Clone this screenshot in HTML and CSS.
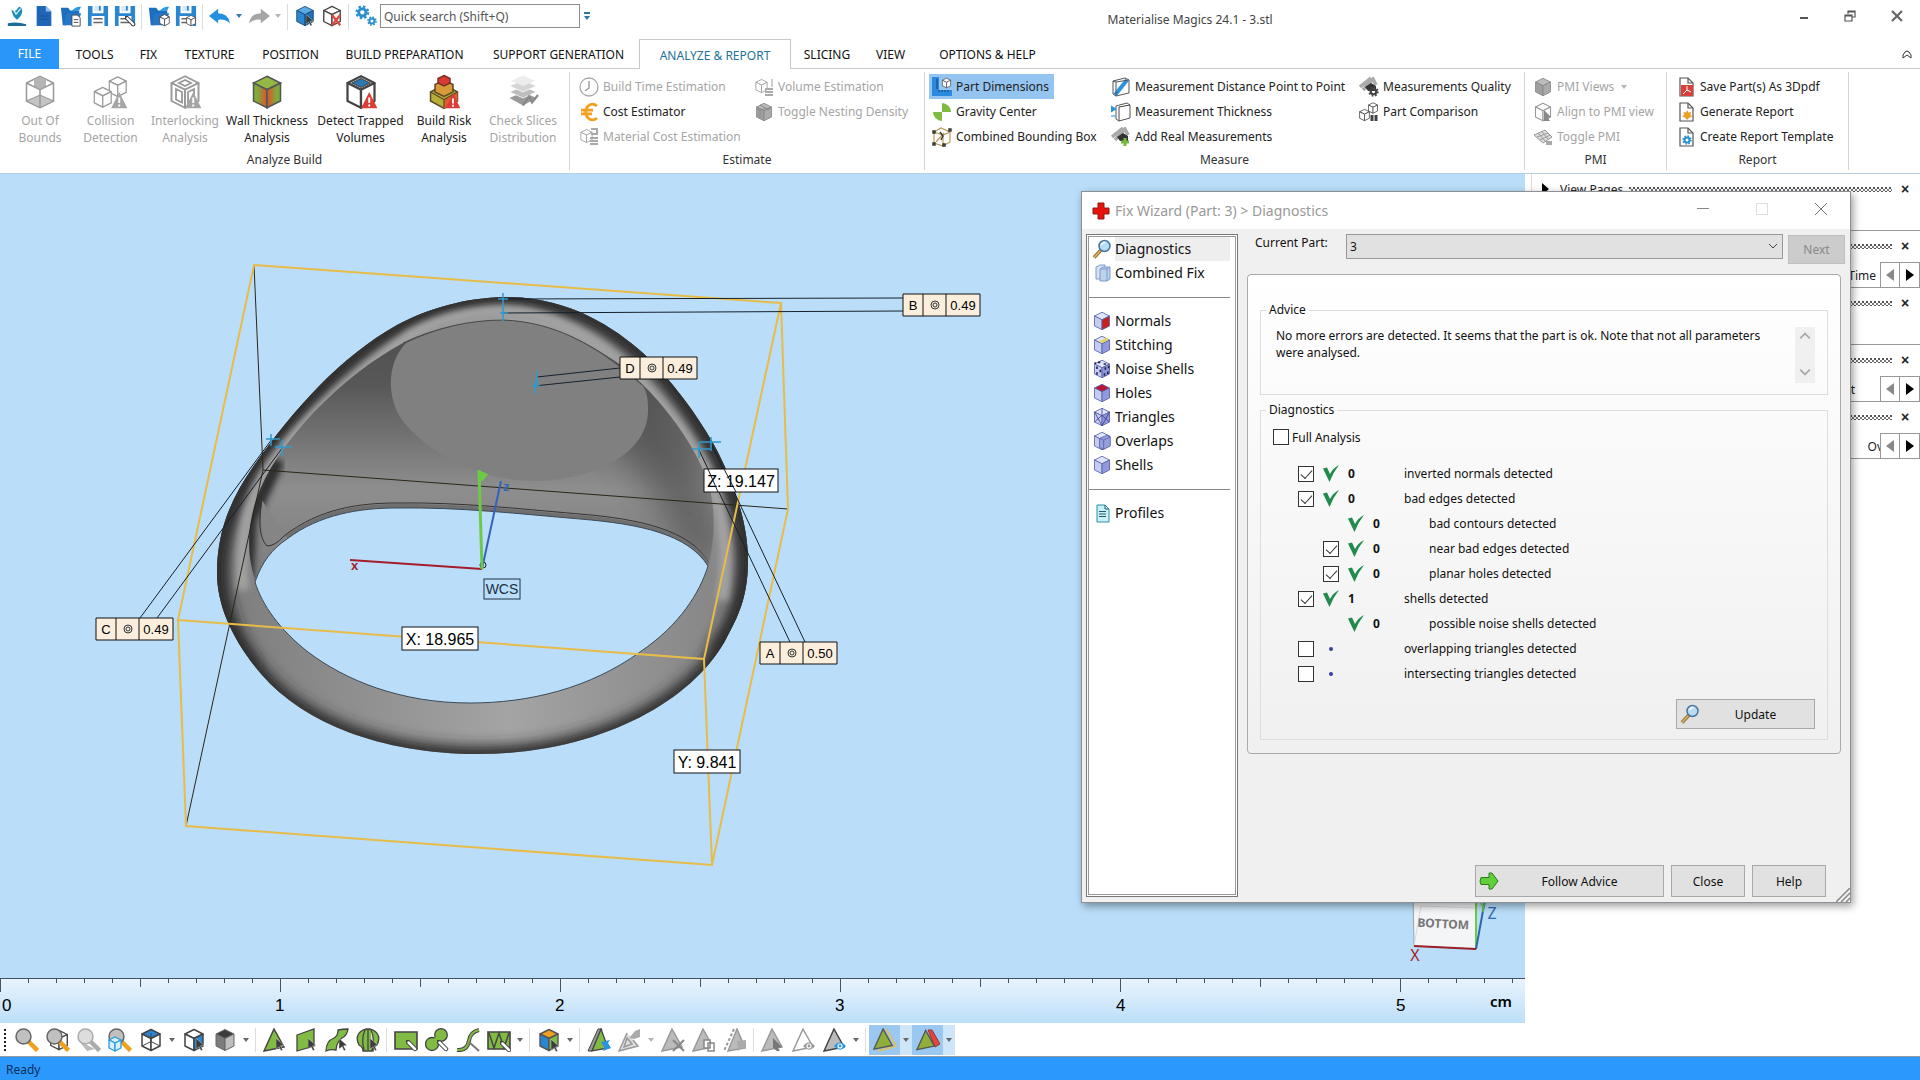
FILE: index.html
```html
<!DOCTYPE html>
<html lang="en">
<head>
  <meta charset="UTF-8" />
  <meta name="viewport" content="width=device-width, initial-scale=1.0" />
  <title>Materialise Magics 24.1 - 3.stl</title>
  <link rel="stylesheet" href="styles.css">
</head>
<body>
  <!-- shared icon shapes -->
  <svg class="defs" width="0" height="0" aria-hidden="true">
    <symbol id="cube" viewBox="0 0 24 24">
      <path class="ct" d="M12 1.500 21 6 12 10.500 3 6z"/>
      <path class="cl" d="M3 6 12 10.500V22.500L3 18z"/>
      <path class="cr" d="M21 6 12 10.500V22.500L21 18z"/>
    </symbol>
    <symbol id="warn" viewBox="0 0 12 12">
      <path d="M6 0 12 12H0z" fill="currentColor"/>
      <path d="M6 4v4M6 9v1.500" stroke="#fff" stroke-width="1.400"/>
    </symbol>
    <symbol id="pointer" viewBox="0 0 10 14">
      <path d="M0 0 9 8 5 8.500 7.500 13 5.500 14 3.500 9.500 0 12z" fill="#3c3c3c" stroke="#fff" stroke-width=".4"/>
    </symbol>
    <symbol id="folder" viewBox="0 0 24 24">
      <path d="M1 3h8l2 3h10v4L7 22H3z" fill="#1d6fbe"/>
      <path d="M7 9h16l-4 13H4z" fill="#2476c6"/>
      <path d="M12 7q5-6 11-5l-2 4z" fill="#2f9be0"/>
    </symbol>
    <symbol id="disk" viewBox="0 0 24 24">
      <path d="M1 1h5v8h12V1h5v22H1z" fill="#2a86cf"/>
      <path d="M8 1h8v6H8z" fill="#d8e8f5"/>
      <path d="M13 1h2v5h-2z" fill="#2a86cf"/>
      <path d="M5 12h14v11H5z" fill="#fff"/>
      <path d="M7 15h10M7 19h10" stroke="#666" stroke-width="1.600"/>
    </symbol>
    <symbol id="mag" viewBox="0 0 24 24">
      <path d="M13 13 22.500 22.500" stroke="var(--h)" stroke-width="4.500"/>
      <circle cx="8.500" cy="8.500" r="7.500" fill="var(--g)" stroke="var(--s)" stroke-width="1.500"/>
    </symbol>
    <symbol id="lens" viewBox="0 0 20 20">
      <path d="M9 11 2 18.500" stroke="#8d7340" stroke-width="3.600"/>
      <path d="M9 11 2 18.500" stroke="#e0b457" stroke-width="1.600"/>
      <circle cx="12.500" cy="7" r="5.500" fill="#b7dcf5" stroke="#47759f" stroke-width="1.500"/>
      <path d="M9.500 6q1-3 4-2.500" stroke="#fff" fill="none" stroke-width="1.500"/>
    </symbol>
    <symbol id="page" viewBox="0 0 20 20">
      <path d="M4 1h8l5 5v13H4z" fill="#fff" stroke="#555" stroke-width="1.200"/>
      <path d="M12 1v5h5" fill="none" stroke="#555" stroke-width="1.200"/>
    </symbol>
    <symbol id="tick" viewBox="0 0 16 17">
      <path d="M0 3.500 4 2.500 7 9Q10 3 16 0 10 7.500 6.500 17 4 12 0 3.500z" fill="#238a4d"/>
    </symbol>
    <symbol id="tri" viewBox="0 0 24 24">
      <path d="M11 1 21 19 1 23z" fill="var(--f)" stroke="var(--s)" stroke-width="1.500"/>
    </symbol>
    <symbol id="gear" viewBox="0 0 20 20">
      <circle cx="10" cy="10" r="5" fill="none" stroke="currentColor" stroke-width="4"/>
      <circle cx="10" cy="10" r="8" fill="none" stroke="currentColor" stroke-width="3" stroke-dasharray="3.200 3.080"/>
    </symbol>
    <symbol id="pen" viewBox="0 0 12 12">
      <path d="M1 1 9 9" stroke="#444" stroke-width="4.500" stroke-linecap="round"/>
      <path d="M2.500 2.500 9 9" stroke="#fff" stroke-width="2.500" stroke-linecap="round"/>
    </symbol>
    <symbol id="roof" viewBox="0 0 20 20">
      <path d="M1 10 12 1M4 13 14 2l3 6" stroke="#aaa" stroke-width="3.500" fill="none"/>
      <path d="M6 10 12 6 17 9V14H9z" fill="#333"/>
    </symbol>
    <symbol id="eye" viewBox="0 0 14 9">
      <path d="M0 4.500Q7-4 14 4.500 7 13 0 4.500z" fill="currentColor"/>
      <circle cx="7" cy="4.500" r="3" fill="#fff"/><circle cx="7" cy="4.500" r="1.700" fill="currentColor"/>
    </symbol>
  </svg>

  <header class="titlebar">
    <div class="quick">
      <button class="q" aria-label="Magics"><svg viewBox="0 0 24 24"><path d="M6 5q1 8 6 11 3-2 5-6 2-6-2-8-2 0-3 3L9 7z" fill="#1b8db5"/><path d="M8 5l3 5 5-6" fill="none" stroke="#dff1f7" stroke-width="1.500"/><path d="M2 20q10-2 20 1v2H2z" fill="#1b6a9a"/></svg></button>
      <button class="q" aria-label="New"><svg viewBox="0 0 24 24"><path d="M4 1h10l6 6v16H4z" fill="#1f66b8"/><path d="M14 1v6h6z" fill="#8fc0ee"/><path d="M8 12h8M8 15.500h8" stroke="#1a4f90" stroke-width="1.200"/></svg></button>
      <button class="q" aria-label="Open"><svg viewBox="0 0 24 24"><use href="#folder"/><path d="M13 11h6l3 3v9h-9z" fill="#fff" stroke="#444"/><path d="M15 16h5M15 19h5" stroke="#444"/></svg></button>
      <button class="q" aria-label="Save"><svg viewBox="0 0 24 24"><use href="#disk"/></svg></button>
      <button class="q" aria-label="Save as"><svg viewBox="0 0 24 24"><use href="#disk"/><use href="#pen" x="12" y="12" width="12" height="12"/></svg></button>
      <i class="vsep"></i>
      <button class="q" aria-label="Open part"><svg viewBox="0 0 24 24"><use href="#folder"/><use class="c-line" href="#cube" x="11" y="9" width="14" height="15"/></svg></button>
      <button class="q" aria-label="Save part"><svg viewBox="0 0 24 24"><use href="#disk"/><use class="c-line" href="#cube" x="11" y="10" width="13" height="14"/></svg></button>
      <i class="vsep"></i>
      <button class="q" aria-label="Undo"><svg viewBox="0 0 24 24"><path d="M0 12 10 4v5q11 0 13 11-5-5-13-4v4z" fill="#2491e0"/></svg></button>
      <i class="drop blue"></i>
      <button class="q" aria-label="Redo"><svg viewBox="0 0 24 24"><path d="M24 12 14 4v5Q3 9 1 20q5-5 13-4v4z" fill="#a5a5a5"/></svg></button>
      <i class="drop pale"></i>
      <i class="vsep"></i>
      <button class="q" aria-label="Select part"><svg viewBox="0 0 24 24"><use class="c-blue" href="#cube"/><use href="#pointer" x="13" y="10" width="9" height="13"/></svg></button>
      <button class="q" aria-label="Unload part"><svg viewBox="0 0 24 24"><use class="c-line" href="#cube"/><path d="m12 11 9 11m0-11-9 11" stroke="#e2463f" stroke-width="2.600"/></svg></button>
      <i class="vsep"></i>
      <button class="q c-gear" aria-label="Settings"><svg viewBox="0 0 24 24"><use href="#gear" x="0" y="0" width="16" height="16"/><use href="#gear" x="13" y="12" width="11" height="11"/></svg></button>
      <input class="search" type="text" placeholder="Quick search (Shift+Q)" aria-label="Quick search">
      <i class="drop bar"></i>
    </div>
    <h1 class="title">Materialise Magics 24.1 - 3.stl</h1>
    <div class="winbtns">
      <button aria-label="Minimize"><svg viewBox="0 0 12 12"><path d="M2 8h8" stroke="#555" stroke-width="2"/></svg></button>
      <button aria-label="Restore"><svg viewBox="0 0 12 12"><path d="M4 4V1h7v6H8M1 5h7v6H1zM1 6h7M4 2h7" fill="none" stroke="#555" stroke-width="1.200"/></svg></button>
      <button aria-label="Close"><svg viewBox="0 0 12 12"><path d="m1 1 10 10M11 1 1 11" stroke="#666" stroke-width="2.200"/></svg></button>
    </div>
  </header>

  <nav class="tabs">
    <a class="file" href="#">FILE</a>
    <a href="#">TOOLS</a>
    <a href="#">FIX</a>
    <a href="#">TEXTURE</a>
    <a href="#">POSITION</a>
    <a href="#">BUILD PREPARATION</a>
    <a href="#">SUPPORT GENERATION</a>
    <a class="active" href="#">ANALYZE &amp; REPORT</a>
    <a href="#">SLICING</a>
    <a href="#">VIEW</a>
    <a href="#">OPTIONS &amp; HELP</a>
    <button class="collapse" aria-label="Collapse ribbon"><svg viewBox="0 0 10 10"><path d="M1 6q4-8 8 0v3L5 6 1 9z" fill="none" stroke="#333"/></svg></button>
  </nav>

  <section class="ribbon">
    <div class="group">
      <div class="big-row">
        <button class="big off"><svg viewBox="0 0 24 24"><path d="M3 6 12 1.500 21 6V18L12 22.500 3 18z" fill="#fff" stroke="#999"/><path d="M3 18 12 14 21 18 12 22.500z" fill="#c4c4c4" stroke="#999" stroke-width=".7"/><path d="M8 4 12 2l4 2v4l-4 2-4-2z" fill="#b5b5b5"/><path d="M3 6 12 10.500 21 6M12 10.500V22" fill="none" stroke="#999"/></svg>Out Of<br>Bounds</button>
        <button class="big off"><svg viewBox="0 0 24 24"><use class="c-off" href="#cube" x="9" y="0" width="15" height="17"/><use class="c-off" href="#cube" x="-1" y="7" width="15" height="17"/><use href="#warn" x="12" y="12" width="11" height="11"/></svg>Collision<br>Detection</button>
        <button class="big off"><svg viewBox="0 0 24 24"><use class="c-off" href="#cube"/><path d="m6 10 4 2v7l-4-2zM18 10l-4 2v7l4-2zM8 6l4-2 4 2-4 2z" fill="none" stroke="#999" stroke-width="1.200"/><use href="#warn" x="12" y="12" width="11" height="11"/></svg>Interlocking<br>Analysis</button>
        <button class="big"><svg viewBox="0 0 24 24"><defs><linearGradient id="wl"><stop offset=".3" stop-color="#7faa3c"/><stop offset="1" stop-color="#e0502c"/></linearGradient><linearGradient id="wr"><stop offset="0" stop-color="#e0502c"/><stop offset=".7" stop-color="#7faa3c"/></linearGradient></defs><path d="M12 1.500 21 6 12 10.500 3 6z" fill="#94b844" stroke="#555"/><path d="M3 6 12 10.500V22.500L3 18z" fill="url(#wl)" stroke="#555"/><path d="M21 6 12 10.500V22.500L21 18z" fill="url(#wr)" stroke="#555"/></svg>Wall Thickness<br>Analysis</button>
        <button class="big"><svg viewBox="0 0 24 24"><use class="c-line" href="#cube"/><path d="M6 6 12 3l6 3-6 3z" fill="#2a7ab8" stroke="#444" stroke-width=".7"/><use class="red" href="#warn" x="12" y="12" width="11" height="11"/></svg>Detect Trapped<br>Volumes</button>
        <button class="big"><svg viewBox="0 0 24 24"><path d="M12 7 21 12v6l-9 5-9-5v-6z" fill="#b7ae38" stroke="#5c4a2a"/><path d="M12 17 21 12v6l-9 5z" fill="#e05a33"/><path d="m3 12 9 5 9-5M12 17v5" fill="none" stroke="#5c4a2a" stroke-width=".8"/><path d="m12 4 6 3v5l-6 3-6-3V7z" fill="#d79b38" stroke="#5c4a2a"/><path d="m12 1 4 2v3l-4 2-4-2V3z" fill="#d83a34" stroke="#7a3028"/><use class="red" href="#warn" x="13" y="13" width="10" height="10"/></svg>Build Risk<br>Analysis</button>
        <button class="big off"><svg viewBox="0 0 24 24"><path d="m12 12 9 4-9 5-9-5z" fill="#999"/><path d="m12 8 9 4-9 4-9-4z" fill="#bdbdbd" stroke="#fff" stroke-width=".5"/><path d="m12 4 9 4-9 4-9-4z" fill="#d5d5d5" stroke="#fff" stroke-width=".5"/><path d="m12 1 8 3.500-8 3.500-8-3.500z" fill="#ececec"/><path d="m12 21 4-6 2 4 4-5" fill="none" stroke="#888" stroke-width="1.500"/></svg>Check Slices<br>Distribution</button>
      </div>
      <h2>Analyze Build</h2>
    </div>

    <div class="group">
      <div class="cols estimate">
        <div class="col">
          <button class="small off"><svg viewBox="0 0 20 20"><circle cx="10" cy="10" r="9" fill="#fff" stroke="#aaa" stroke-width="1.300"/><path d="M10 4v7l-4 3" fill="none" stroke="#999" stroke-width="1.400"/></svg>Build Time Estimation</button>
          <button class="small"><svg viewBox="0 0 20 20"><path d="M18 4Q13 0 8.500 4.500 5 10 8.500 15.500 13 20 18 16M2 8.200h12M2 11.800h11" fill="none" stroke="#f0a01e" stroke-width="2.800"/></svg>Cost Estimator</button>
          <button class="small off"><svg viewBox="0 0 20 20"><use class="c-off" href="#cube" width="15" height="18"/><path d="M11 11h8M11 14h8M11 17h8M12 2h6v5h-6" stroke="#aaa" stroke-width="2" fill="none"/></svg>Material Cost Estimation</button>
        </div>
        <div class="col">
          <button class="small off"><svg viewBox="0 0 20 20"><use class="c-off" href="#cube" width="15" height="18"/><path d="M11 12h8M11 15h8M11 18h8" stroke="#aaa" stroke-width="2"/><path d="M18 2v8" stroke="#999"/></svg>Volume Estimation</button>
          <button class="small off"><svg viewBox="0 0 20 20"><use class="c-grey" href="#cube" width="20" height="20"/><path d="M3 8 17 6M6 3l9 5M6 8v8" stroke="#888"/></svg>Toggle Nesting Density</button>
        </div>
      </div>
      <h2>Estimate</h2>
    </div>

    <div class="group">
      <div class="cols measure">
        <div class="col">
          <button class="small on"><svg viewBox="0 0 20 20"><path d="M0 0h7v13h13v6H0z" fill="#2a8ae0"/><path d="M5 2v10M7 13v2m3-2v2m3-2v2m3-2v2" stroke="#123e70"/><use class="c-line" href="#cube" x="9" y="0" width="11" height="12"/></svg>Part Dimensions</button>
          <button class="small"><svg viewBox="0 0 20 20"><path d="M10 10h9a9 9 0 0 1-9 9zM10 10H1a9 9 0 0 1 9-9z" fill="#fff"/><path d="M10 10V1a9 9 0 0 1 9 9zM10 10v9a9 9 0 0 1-9-9z" fill="#7dbb42"/></svg>Gravity Center</button>
          <button class="small"><svg viewBox="0 0 20 20"><path d="m2 5 7-4 9 4v10l-7 4-9-3zM2 5l9 3 7-3M11 8v11M4 15l8-9" fill="none" stroke="#b99b5a" stroke-width="1.200"/><path d="M1 4h2v2H1zM17 2h2v2h-2zM1 16h2v2H1zM11 17h2v2h-2zM8 5l3 4-2 4" fill="none" stroke="#333" stroke-width="1.400"/></svg>Combined Bounding Box</button>
        </div>
        <div class="col">
          <button class="small"><svg viewBox="0 0 20 20"><path d="m2 4 12-3 4 2v13L5 19l-3-2z" fill="#fff" stroke="#555"/><path d="M4 18 16 3" stroke="#2a94dc" stroke-width="4"/><path d="M5 5v14M5 5 18 3M2 4l3 1" fill="none" stroke="#555"/></svg>Measurement Distance Point to Point</button>
          <button class="small"><svg viewBox="0 0 20 20"><path d="m5 4 11-3 3 2v13L8 19l-3-2z" fill="#fff" stroke="#555"/><path d="M8 5v14M8 5 19 3" stroke="#444" fill="none"/><path d="M0 4l5 3-5 3zM5 14h-5" fill="#2a94dc" stroke="#2a94dc"/></svg>Measurement Thickness</button>
          <button class="small"><svg viewBox="0 0 20 20"><use href="#roof" width="20" height="20"/><path d="M14 11v8M10 15h8" stroke="#78b83e" stroke-width="3"/></svg>Add Real Measurements</button>
        </div>
        <div class="col">
          <button class="small"><svg viewBox="0 0 20 20"><use href="#roof" width="20" height="20"/><g class="dark"><use href="#gear" x="9" y="9" width="11" height="11"/></g></svg>Measurements Quality</button>
          <button class="small"><svg viewBox="0 0 20 20"><use class="c-line" href="#cube" x="8" y="0" width="12" height="12"/><use class="c-line" href="#cube" x="-1" y="6" width="13" height="14"/><path d="M13 13v6M17 13v6" stroke="#444" stroke-width="3"/></svg>Part Comparison</button>
        </div>
      </div>
      <h2>Measure</h2>
    </div>

    <div class="group">
      <div class="col pmi">
        <button class="small off"><svg viewBox="0 0 20 20"><use class="c-grey" href="#cube" width="20" height="20"/></svg>PMI Views<i class="drop pale"></i></button>
        <button class="small off"><svg viewBox="0 0 20 20"><use class="c-off" href="#cube" width="20" height="20"/><path d="m11 8 7 7-3 1 2 3h-6z" fill="#888"/></svg>Align to PMI view</button>
        <button class="small off"><svg viewBox="0 0 20 20"><path d="M1 8 12 3l7 7-9 6zM4 10l11-4M7 13l10-5M5 6l8 9M9 5l7 8" fill="#ddd" stroke="#999"/><path d="M13 14h6v4h-6z" fill="#aaa"/></svg>Toggle PMI</button>
      </div>
      <h2>PMI</h2>
    </div>

    <div class="group">
      <div class="col report">
        <button class="small"><svg viewBox="0 0 20 20"><use href="#page"/><path d="M5 8h12v11H5z" fill="#d9403a"/><path d="m7 17 4-4V9m0 4 4 2" stroke="#fff" fill="none"/></svg>Save Part(s) As 3Dpdf</button>
        <button class="small"><svg viewBox="0 0 20 20"><use href="#page"/><path d="m11 8 1.500 2.500L15 10l-.5 3 2 1.500-3 1L11 18l-2-2.500-3-1L8 13l-.5-3 2.500.5z" fill="#eb9f26"/></svg>Generate Report</button>
        <button class="small c-gear"><svg viewBox="0 0 20 20"><use href="#page"/><use href="#gear" x="6" y="8" width="10" height="10"/></svg>Create Report Template</button>
      </div>
      <h2>Report</h2>
    </div>
  </section>

  <main class="work">
    <div class="viewport">
      <svg class="scene" width="100%" height="100%" role="img" aria-label="Ring model with bounding box">
        <defs>
          <path id="outer" d="M217 573C217 530 232 497 253 467C293 410 340 357 397 325C437 304 475 297 510 297C570 298 615 328 643 353C672 380 697 415 713 443C735 483 748 525 748 560C748 592 741 612 727 637C695 700 600 754 478 754C380 754 303 722 262 675C232 640 217 605 217 573Z"/>
          <path id="hole" d="M255 582C262 562 272 549 287 539C320 514 360 508 397 508C460 507 520 514 580 519C640 524 688 534 708 566C700 592 680 625 640 652C590 688 530 703 470 703C400 703 345 680 308 652C280 630 262 605 255 582Z"/>
          <path id="inside" d="M255 580C246 552 248 525 256 500C266 470 286 443 313 413C345 380 375 358 403 343C435 328 470 320 503 320C555 322 590 345 620 365C660 395 700 450 710 490C716 515 714 545 708 566C688 534 640 524 580 519C520 514 460 507 397 508C360 508 320 514 287 539C272 549 262 562 255 580Z"/>
          <clipPath id="outer-clip"><use href="#outer"/></clipPath>
          <clipPath id="inside-clip"><use href="#inside"/></clipPath>
          <filter id="b3" x="-20%" y="-20%" width="140%" height="140%"><feGaussianBlur stdDeviation="3"/></filter>
          <filter id="b8" x="-20%" y="-20%" width="140%" height="140%"><feGaussianBlur stdDeviation="7"/></filter>
          <filter id="b16" x="-20%" y="-20%" width="140%" height="140%"><feGaussianBlur stdDeviation="16"/></filter>
          <linearGradient id="wall" x1="0" y1="0" x2="0" y2="1">
            <stop offset="0" stop-color="#4e4e4e"/><stop offset=".25" stop-color="#585858"/><stop offset=".65" stop-color="#8e8e8e"/><stop offset="1" stop-color="#7c7c7c"/>
          </linearGradient>
          <linearGradient id="band" x1="0" y1="0" x2="1" y2="0">
            <stop offset="0" stop-color="#7c7c7c"/><stop offset=".55" stop-color="#a4a4a4"/><stop offset="1" stop-color="#828282"/>
          </linearGradient>
        </defs>
        <g transform="translate(0,-174)">
          <!-- ring -->
          <use href="#outer" fill="url(#band)"/>
          <g clip-path="url(#outer-clip)">
            <use href="#outer" fill="none" stroke="#2c2c2c" stroke-width="15" filter="url(#b8)"/>
            <path d="M250 670C225 640 217 600 217 573C217 530 232 497 253 467C293 410 340 357 397 325C437 304 475 297 510 297C570 298 615 328 643 353C672 380 697 415 713 443C735 483 748 525 748 560C748 600 735 635 715 655" fill="none" stroke="#333" stroke-width="18" filter="url(#b8)"/>
            <use href="#outer" fill="none" stroke="#2c2c2c" stroke-width="3" filter="url(#b3)"/>
            <path d="M243 590C238 545 248 500 269 468C295 430 349 378 414 333C445 317 475 311 505 311C545 312 583 334 610 354C652 390 682 428 704 467C723 507 730 550 722 600" fill="none" stroke="#a2a2a2" stroke-width="12" filter="url(#b3)"/>
          </g>
          <use href="#inside" fill="url(#wall)"/>
          <g clip-path="url(#inside-clip)">
            <path d="M720 545 700 455 640 372 610 430 700 570z" fill="#4a4a4a" opacity=".6" filter="url(#b16)"/>
            <path d="M246 590 250 520 278 460" fill="none" stroke="#2e2e2e" stroke-width="14" filter="url(#b3)"/>
            <path d="M262 500Q280 530 290 538L268 546Q258 530 262 500z" fill="#858585"/>
            <path d="M262 500Q256 535 267 546Q275 546 284 536" fill="none" stroke="#333"/>
            <path d="M284 536C320 508 360 503 397 503C460 502 520 509 580 514C640 519 690 530 708 562" fill="none" stroke="#333"/>
            <path d="M287 537C320 511 360 506 397 506C460 505 520 512 580 517C640 522 690 534 708 565" fill="none" stroke="#6f6f6f" stroke-width="4"/>
          </g>
          <path d="M406 343C385 365 388 400 402 420C430 455 480 481 537 481C600 479 650 450 648 408C648 398 647 392 642 385C600 350 560 322 503 320C470 320 435 329 406 343Z" fill="#808080"/>
          <path d="M403 343C435 328 470 320 503 320C555 322 590 345 620 365L642 385" fill="none" stroke="#4a4a4a"/>
          <use href="#hole" fill="#badef9" stroke="#3b4a57"/>

          <!-- bounding box, hidden edges thin -->
          <path d="M254 265 263 470 788 509M263 470 186 826" fill="none" stroke="#2b2618"/>
          <path d="M254 265 781 303 788 509 712 865 186 826 178 620zM178 620 704 659 712 865M704 659 781 303" fill="none" stroke="#e8bc48" stroke-width="2"/>

          <!-- measurement leaders -->
          <path d="M503 299 903 298M503 313 903 311M537 377 620 368M534 386 620 377M140 618 272 439M157 618 283 447M699 450 790 642M711 443 805 642" fill="none" stroke="#16202c"/>
          <path d="M503 293v28M498 299h10M500 313h8M266 439h14M271 434v12M275 447h17M282 440v16M537 371v15M532 386h8M535 380v14M692 449h18M699 442v16M700 442h21M711 437v14" fill="none" stroke="#2f9acb" stroke-width="1.500"/>

          <!-- world axes -->
          <circle cx="483" cy="565" r="3" fill="none" stroke="#16202c"/>
          <path d="M350 560 482 569" stroke="#a51d2c" stroke-width="2"/>
          <path d="M482 569 501 481" stroke="#3560c0" stroke-width="2"/>
          <path d="M482 569 479 470" stroke="#6ccb45" stroke-width="3"/>
          <path d="m478 470 10 4-5 7-5-2z" fill="#6ccb45"/>
          <text class="axis red-t" x="351" y="570">x</text>
          <text class="axis blue-t" x="503" y="491">z</text>

          <g class="dim">
            <rect x="402" y="627" width="76" height="23"/><text x="440" y="645">X: 18.965</text>
            <rect x="704" y="469" width="74" height="23"/><text x="741" y="487">Z: 19.147</text>
            <rect x="674" y="750" width="66" height="23"/><text x="707" y="768">Y: 9.841</text>
          </g>
          <path d="M708 469 718 492M724 469 736 492" stroke="#16202c"/>
          <rect x="484" y="579" width="36" height="20" fill="none" stroke="#1c2f42"/>
          <text class="wcs" x="502" y="594">WCS</text>

          <g class="tag" transform="translate(903,294)"><path d="M0 0h77v22H0zM20 0v22M43 0v22"/><circle cx="32" cy="11" r="4"/><circle cx="32" cy="11" r="2"/><text x="10" y="16">B</text><text x="60" y="16">0.49</text></g>
          <g class="tag" transform="translate(620,357)"><path d="M0 0h77v22H0zM20 0v22M43 0v22"/><circle cx="32" cy="11" r="4"/><circle cx="32" cy="11" r="2"/><text x="10" y="16">D</text><text x="60" y="16">0.49</text></g>
          <g class="tag" transform="translate(760,642)"><path d="M0 0h77v22H0zM20 0v22M43 0v22"/><circle cx="32" cy="11" r="4"/><circle cx="32" cy="11" r="2"/><text x="10" y="16">A</text><text x="60" y="16">0.50</text></g>
          <g class="tag" transform="translate(96,618)"><path d="M0 0h77v22H0zM20 0v22M43 0v22"/><circle cx="32" cy="11" r="4"/><circle cx="32" cy="11" r="2"/><text x="10" y="16">C</text><text x="60" y="16">0.49</text></g>

          <!-- orientation cube -->
          <path d="M1413 895h63v54l-62-3z" fill="#f4f5f6" stroke="#98a2ab"/>
          <path d="M1414 946 1421 906 1476 908" fill="none" stroke="#d8dadc"/>
          <path d="M1476 895v54" stroke="#6ccb45" stroke-width="2"/>
          <path d="M1476 949 1485 900" stroke="#2f68ac" stroke-width="2"/>
          <path d="M1414 946 1476 949" stroke="#991f28" stroke-width="2"/>
          <text class="bottom" transform="translate(1443,928) rotate(3)">BOTTOM</text>
          <text class="cube-ax red-t" x="1415" y="961">X</text>
          <text class="cube-ax blue-t" x="1492" y="919">Z</text>
          <text class="cube-ax green-t" x="1483" y="912">Y</text>
        </g>
      </svg>

      <svg class="ruler" width="100%" height="45" role="img" aria-label="Ruler in centimetres">
        <defs>
          <pattern id="ticks" width="280" height="16" patternUnits="userSpaceOnUse">
            <path d="M.5 0v14M140.500 0v9M28.500 0v5M56.500 0v5M84.500 0v5M112.500 0v5M168.500 0v5M196.500 0v5M224.500 0v5M252.500 0v5" stroke="#3f5468"/>
          </pattern>
        </defs>
        <rect width="100%" height="16" fill="url(#ticks)"/>
        <path d="M0 .5h1525" stroke="#3f5468"/>
        <text x="2" y="33">0</text>
        <text x="275" y="33">1</text>
        <text x="555" y="33">2</text>
        <text x="835" y="33">3</text>
        <text x="1116" y="33">4</text>
        <text x="1396" y="33">5</text>
        <text class="unit" x="1490" y="29">cm</text>
      </svg>
    </div>

    <aside class="pages">
      <section class="sheet line">
        <header><i class="open"></i><span>View Pages</span><i class="dots"></i><button aria-label="Close">×</button></header>
      </section>
      <section class="sheet">
        <header><i class="dots"></i><button aria-label="Close">×</button></header>
        <div class="strip"><span>Time</span><button aria-label="Left"><i class="arr left"></i></button><button aria-label="Right"><i class="arr"></i></button></div>
      </section>
      <section class="sheet line">
        <header><i class="dots"></i><button aria-label="Close">×</button></header>
      </section>
      <section class="sheet">
        <header><i class="dots"></i><button aria-label="Close">×</button></header>
        <div class="strip"><span class="far">t</span><button aria-label="Left"><i class="arr left"></i></button><button aria-label="Right"><i class="arr"></i></button></div>
      </section>
      <section class="sheet">
        <header><i class="dots"></i><button aria-label="Close">×</button></header>
        <div class="strip"><span class="cut">Ov</span><button aria-label="Left"><i class="arr left"></i></button><button aria-label="Right"><i class="arr"></i></button></div>
      </section>
    </aside>
  </main>

  <div class="toolbar">
    <i class="grip"></i>
    <button class="t m-color" aria-label="Zoom"><svg viewBox="0 0 24 24"><use href="#mag"/></svg></button>
    <button class="t m-color" aria-label="Zoom part"><svg viewBox="0 0 24 24"><use class="c-line" href="#cube" x="2" width="22" height="24"/><use href="#mag"/></svg></button>
    <button class="t m-grey" aria-label="Unzoom"><svg viewBox="0 0 24 24"><path d="M2 13 10 23l8-2z" fill="#bbb"/><use href="#mag"/></svg></button>
    <button class="t m-color" aria-label="Zoom box"><svg viewBox="0 0 24 24"><use href="#mag"/><use class="c-skyline" href="#cube" x="-2" y="8" width="18" height="16"/></svg></button>
    <button class="t" aria-label="View"><svg viewBox="0 0 24 24"><use class="c-top" href="#cube"/><path d="M3 18 12 13.500 21 18M12 13V5" fill="none" stroke="#444"/></svg></button>
    <i class="drop"></i>
    <button class="t" aria-label="Face view"><svg viewBox="0 0 24 24"><use class="c-side" href="#cube"/><use href="#pointer" x="14" y="10" width="9" height="13"/></svg></button>
    <button class="t" aria-label="Shading"><svg viewBox="0 0 24 24"><use class="c-shade" href="#cube"/></svg></button>
    <i class="drop"></i>
    <i class="tsep"></i>
    <button class="t t-green" aria-label="Mark triangle"><svg viewBox="0 0 24 24"><use href="#tri"/><use href="#pointer" x="13" y="10" width="9" height="13"/></svg></button>
    <button class="t" aria-label="Mark plane"><svg viewBox="0 0 24 24"><path d="M3 7 20 1v17L3 23z" fill="#82bb44" stroke="#444" stroke-width="1.300"/><use href="#pointer" x="14" y="10" width="9" height="13"/></svg></button>
    <button class="t" aria-label="Mark surface"><svg viewBox="0 0 24 24"><path d="M13 2q5-1 10-1-1 7-6 9-5 3-6 12-5-1-10 1 0-10 8-13 4-2 4-8z" fill="#82bb44" stroke="#444" stroke-width="1.300"/><use href="#pointer" x="14" y="10" width="9" height="13"/></svg></button>
    <button class="t" aria-label="Mark shell"><svg viewBox="0 0 24 24"><path d="M7 23q0-4-4-6Q-2 7 7 2q5-2 10 0 9 5 4 15-4 2-4 6zM8 22Q5 10 9 2M12 22V1M16 22q3-12-1-20" fill="#82bb44" stroke="#444" stroke-width="1.300"/><use href="#pointer" x="14" y="10" width="9" height="13"/></svg></button>
    <i class="tsep"></i>
    <button class="t" aria-label="Rectangle marking"><svg viewBox="0 0 24 24"><path d="M1 4h22v17H1z" fill="#82bb44" stroke="#444" stroke-width="1.600"/><use href="#pen" x="12" y="12" width="12" height="12"/></svg></button>
    <button class="t" aria-label="Freeform marking"><svg viewBox="0 0 24 24"><circle cx="7" cy="16" r="6.500" fill="#82bb44" stroke="#444" stroke-width="1.300"/><circle cx="16" cy="7" r="6.300" fill="#82bb44" stroke="#444" stroke-width="1.300"/><path d="m6 13 7-6 4 4-7 7z" fill="#82bb44"/><use href="#pen" x="12" y="12" width="12" height="12"/></svg></button>
    <button class="t" aria-label="Brush marking"><svg viewBox="0 0 24 24"><path d="M1 22q10 1 12-9Q14 4 23 2" fill="none" stroke="#444" stroke-width="4"/><path d="M1 22q10 1 12-9Q14 4 23 2" fill="none" stroke="#82bb44" stroke-width="2"/><path d="m13 14 10 9" stroke="#777" stroke-width="2"/></svg></button>
    <button class="t" aria-label="Mark region"><svg viewBox="0 0 24 24"><path d="M1 4h22v17H1z" fill="#82bb44" stroke="#444" stroke-width="1.600"/><path d="m2 5 5 15 5-15 5 15 5-15" fill="none" stroke="#444" stroke-width="1.500"/><use href="#pen" x="13" y="13" width="12" height="12"/></svg></button>
    <i class="drop"></i>
    <i class="tsep"></i>
    <button class="t" aria-label="Mark part"><svg viewBox="0 0 24 24"><use class="c-multi" href="#cube"/><use href="#pointer" x="14" y="11" width="9" height="13"/></svg></button>
    <i class="drop"></i>
    <i class="tsep"></i>
    <button class="t t-green" aria-label="Toggle marked"><svg viewBox="0 0 24 24"><path d="M11 1 1 23h4L15 1z" fill="#999" stroke="#444"/><path d="M14 1 5 23l16-3z" fill="#82bb44" stroke="#444" stroke-width="1.300"/><path d="m14 14 9-2-2 3 3 5-8 3 1-4z" fill="#2a94dc"/></svg></button>
    <button class="t" aria-label="Reduce"><svg viewBox="0 0 24 24"><path d="M9 5 1 23l19-5-5-6M9 10 6 19l8-3z" fill="#ddd" stroke="#999" stroke-width="1.500"/><path d="m11 10 6-7 5-2v8l-6 2z" fill="#aaa"/></svg></button>
    <i class="drop pale"></i>
    <button class="t t-grey" aria-label="Delete marked"><svg viewBox="0 0 24 24"><use href="#tri"/><path d="m12 12 11 11m0-11L12 23" stroke="#888" stroke-width="2"/></svg></button>
    <button class="t t-grey" aria-label="Copy marked"><svg viewBox="0 0 24 24"><use href="#tri"/><path d="M12 12h6v8h-6zM16 15h6v8h-6z" fill="#fff" stroke="#888" stroke-width="1.500"/></svg></button>
    <button class="t" aria-label="Separate marked"><svg viewBox="0 0 24 24"><path d="M11 1 1 23" stroke="#999" stroke-width="2" stroke-dasharray="3 2"/><path d="M14 1 5 23l17-3z" fill="#bbb" stroke="#999" stroke-width="1.500"/><path d="m14 13 9-1v9l-3-2-5 4z" fill="#aaa"/></svg></button>
    <i class="tsep"></i>
    <button class="t t-grey" aria-label="Select"><svg viewBox="0 0 24 24"><use href="#tri"/><path d="m12 10 9 9-4 1 2 3h-3l-4-3z" fill="#777"/></svg></button>
    <button class="t t-hollow" aria-label="Hide marked"><svg viewBox="0 0 24 24"><use href="#tri"/><use href="#eye" x="11" y="14" width="12" height="8"/></svg></button>
    <button class="t t-dark" aria-label="Show marked"><svg viewBox="0 0 24 24"><use href="#tri"/><use href="#eye" x="11" y="14" width="12" height="8"/></svg></button>
    <i class="drop"></i>
    <i class="tsep"></i>
    <button class="t t-olive hot" aria-label="Show outline"><svg viewBox="0 0 24 24"><path d="m13 1 10 17-18 5" fill="none" stroke="#d8c070" stroke-width="2"/><use href="#tri" width="22" height="22"/></svg></button>
    <i class="drop hot2"></i>
    <button class="t t-olive hot" aria-label="Show back faces"><svg viewBox="0 0 24 24"><path d="m12 2 4 0 8 14-5 3z" fill="#e2463f" stroke="#933"/><use href="#tri" width="21" height="24"/></svg></button>
    <i class="drop hot2"></i>
  </div>
  <footer class="status">Ready</footer>

  <div class="dialog" role="dialog" aria-label="Fix Wizard">
    <header class="dlg-title">
      <svg viewBox="0 0 18 18"><path d="M6 1h6v5h5v6h-5v5H6v-5H1V6h5z" fill="#e8120c" stroke="#8d1a14"/></svg>
      <h2>Fix Wizard (Part: 3) &gt; Diagnostics</h2>
      <button aria-label="Minimize"><svg viewBox="0 0 14 14"><path d="M1 6.500h12" stroke="#888"/></svg></button>
      <button aria-label="Maximize"><svg viewBox="0 0 14 14"><path d="M1.500 1.500h11v11h-11z" fill="none" stroke="#ddd"/></svg></button>
      <button aria-label="Close"><svg viewBox="0 0 14 14"><path d="m1 1 12 12M13 1 1 13" stroke="#777"/></svg></button>
    </header>
    <div class="dlg-body">
      <ul class="steps">
        <li class="current"><svg viewBox="0 0 20 20"><use href="#lens"/></svg><a href="#">Diagnostics</a></li>
        <li><svg viewBox="0 0 20 20"><path d="M4 4 8 2h5v12l-3 2H4z" fill="#d5e3f5" stroke="#7e9cc8"/><path d="M8 6l3-2h7v12l-3 2H8z" fill="#bcd2ef" stroke="#7e9cc8"/><path d="M8 6h7v12M15 6l3-2" fill="none" stroke="#7e9cc8"/></svg><a href="#">Combined Fix</a></li>
        <li class="rule"></li>
        <li><svg viewBox="0 0 24 24"><use class="c-norm" href="#cube"/></svg><a href="#">Normals</a></li>
        <li><svg viewBox="0 0 24 24"><use class="c-lav" href="#cube"/><path d="m8 8 10-5 2 3-8 4z" fill="#e0d560"/></svg><a href="#">Stitching</a></li>
        <li><svg viewBox="0 0 24 24"><use class="c-lav" href="#cube"/><path d="M5 9h2v3H5zM9 13h2v3H9zM5 16h2v3H5zM15 10h2v3h-2zM18 15h2v3h-2zM14 17h2v3h-2zM7 3h3v2H7zM14 5h3v2h-3zM3 4h2v2H3zM19 8h2v3h-2z" fill="#22264e"/></svg><a href="#">Noise Shells</a></li>
        <li><svg viewBox="0 0 24 24"><use class="c-hole" href="#cube"/></svg><a href="#">Holes</a></li>
        <li><svg viewBox="0 0 24 24"><use class="c-lav" href="#cube"/><path d="m3 6 9 16.500L21 6M12 2v8M3 18l9-8 9 8" fill="none" stroke="#3c3c8c"/></svg><a href="#">Triangles</a></li>
        <li><svg viewBox="0 0 24 24"><use class="c-lav" href="#cube"/><path d="m9 9 9-4 4 2v11l-8 4-5-2z" fill="#96a0dc" stroke="#5a62a8"/><path d="M9 9l5 2v11M14 11l8-4" fill="none" stroke="#5a62a8"/></svg><a href="#">Overlaps</a></li>
        <li><svg viewBox="0 0 24 24"><use class="c-lav" href="#cube"/></svg><a href="#">Shells</a></li>
        <li class="rule"></li>
        <li><svg viewBox="0 0 20 20"><path d="M5 2h8l4 4v13H5z" fill="#c9f1f7" stroke="#2d8ea3"/><path d="M13 2v4h4M7 8.500h7M7 11h7M7 13.500h7" fill="none" stroke="#2a5a70"/></svg><a href="#">Profiles</a></li>
      </ul>
      <div class="pane">
        <div class="part-row">
          <label for="part">Current Part:</label>
          <div class="pick">
            <select id="part"><option>3</option></select>
            <svg viewBox="0 0 10 10"><path d="m1 3 4 4 4-4" fill="none" stroke="#444"/></svg>
          </div>
          <button class="next" disabled>Next</button>
        </div>
        <div class="box">
          <fieldset>
            <legend>Advice</legend>
            <div class="advice">
              <p>No more errors are detected. It seems that the part is ok. Note that not all parameters were analysed.</p>
              <div class="scroll">
                <button aria-label="Scroll up"><svg viewBox="0 0 10 10"><path d="m1 7 4-4 4 4" fill="none" stroke="#aaa" stroke-width="1.500"/></svg></button>
                <button aria-label="Scroll down"><svg viewBox="0 0 10 10"><path d="m1 3 4 4 4-4" fill="none" stroke="#aaa" stroke-width="1.500"/></svg></button>
              </div>
            </div>
          </fieldset>
          <fieldset>
            <legend>Diagnostics</legend>
            <div class="diag">
              <label class="full"><input type="checkbox">Full Analysis</label>
              <ul class="checks">
                <li><input type="checkbox" id="c1" checked><svg><use href="#tick"/></svg><b>0</b><label for="c1">inverted normals detected</label></li>
                <li><input type="checkbox" id="c2" checked><svg><use href="#tick"/></svg><b>0</b><label for="c2">bad edges detected</label></li>
                <li class="sub"><span></span><svg><use href="#tick"/></svg><b>0</b><span>bad contours detected</span></li>
                <li class="sub"><input type="checkbox" id="c3" checked><svg><use href="#tick"/></svg><b>0</b><label for="c3">near bad edges detected</label></li>
                <li class="sub"><input type="checkbox" id="c4" checked><svg><use href="#tick"/></svg><b>0</b><label for="c4">planar holes detected</label></li>
                <li><input type="checkbox" id="c5" checked><svg><use href="#tick"/></svg><b>1</b><label for="c5">shells detected</label></li>
                <li class="sub"><span></span><svg><use href="#tick"/></svg><b>0</b><span>possible noise shells detected</span></li>
                <li><input type="checkbox" id="c6"><i class="dot"></i><b></b><label for="c6">overlapping triangles detected</label></li>
                <li><input type="checkbox" id="c7"><i class="dot"></i><b></b><label for="c7">intersecting triangles detected</label></li>
              </ul>
              <button class="btn update"><svg viewBox="0 0 20 20"><use href="#lens"/></svg><span>Update</span></button>
            </div>
          </fieldset>
        </div>
        <div class="actions">
          <button class="btn follow"><svg viewBox="0 0 20 20"><path d="M2 6.500h8V2h3l6 8-6 8h-3v-4.500H2q-2-3 0-7z" fill="#5fcf3c" stroke="#2c7a1c"/></svg><span>Follow Advice</span></button>
          <button class="btn"><span>Close</span></button>
          <button class="btn"><span>Help</span></button>
        </div>
      </div>
    </div>
    <svg class="resize" viewBox="0 0 14 14"><path d="M0 14 14 0M5 14l9-9M10 14l4-4" stroke="#888" stroke-width="1.500"/></svg>
  </div>
</body>
</html>
```
FILE: styles.css
```css
* {
  box-sizing: border-box;
}
body {
  margin: 0;
  min-height: 100vh;
  display: flex;
  flex-direction: column;
  position: relative;
  overflow: hidden;
  background: #fff;
  color: #222;
  font-family: "Noto Sans", "Open Sans", sans-serif;
  font-size: 12px;
}
button {
  font: inherit;
  color: inherit;
  background: none;
  border: 0;
  padding: 0;
}
ul {
  list-style: none;
  margin: 0;
  padding: 0;
}
h1, h2, p {
  margin: 0;
  font-weight: normal;
}
a {
  color: inherit;
  text-decoration: none;
}
.defs {
  position: absolute;
}

/* cube colours */
.ct, .cl, .cr { stroke: var(--ce, #555); stroke-width: var(--cw, 1); stroke-linejoin: round; }
.ct { fill: var(--ct, #fff); }
.cl { fill: var(--cl, #fff); }
.cr { fill: var(--cr, #fff); }
.c-line { --ce: #444; --cw: 1.5; }
.c-off { --ce: #999; --cw: 1.3; }
.c-grey { --ct: #bbb; --cl: #a0a0a0; --cr: #aaa; --ce: #888; }
.c-blue { --ct: #5aaae8; --cl: #2a86d0; --cr: #1f70b8; --ce: #1c4c78; }
.c-skyline { --ct: #d8f0fd; --cl: #d8f0fd; --cr: #d8f0fd; --ce: #2a9ae0; --cw: 2; }
.c-top { --ct: #2a86d0; --ce: #444; --cw: 1.5; }
.c-side { --cr: #2a86d0; --ce: #444; --cw: 1.5; }
.c-shade { --ct: #3c3c3c; --cl: #7c7c7c; --cr: #bdbdbd; --ce: #666; }
.c-multi { --ct: #f0a01e; --cl: #2a86d0; --cr: #82bb44; --ce: #555; --cw: 1.4; }
.c-lav { --ct: #e0e6fa; --cl: #c3cdf3; --cr: #8f98dc; --ce: #5a62a8; }
.c-norm { --ct: #e0e6fa; --cl: #c3cdf3; --cr: #c8201c; --ce: #5a62a8; }
.c-hole { --ct: #b81438; --cl: #c3cdf3; --cr: #8f98dc; --ce: #5a62a8; }
.c-gear svg { color: #2a8fd0; }
.dark { color: #444; }
.red { color: #dc3c36; }

/* title bar */
.titlebar {
  height: 38px;
  display: grid;
  grid-template-columns: 600px 1fr 140px;
}
.quick {
  display: flex;
  align-items: flex-start;
  padding: 4px 0 0 3px;
}
.q {
  width: 27px;
  height: 24px;
}
.q svg {
  display: block;
  width: 22px;
  height: 22px;
  margin: 1px auto;
}
.vsep {
  width: 1px;
  height: 26px;
  margin: 0 3px;
  background: #dcdcdc;
}
.drop {
  width: 12px;
  height: 24px;
  display: flex;
  align-items: center;
  justify-content: center;
}
.drop::after {
  content: "";
  border: 3px solid transparent;
  border-top: 4px solid #666;
  border-bottom: 0;
}
.drop.blue::after { border-top-color: #3a78a8; }
.drop.pale::after { border-top-color: #b5b5b5; }
.drop.bar {
  flex-direction: column;
  gap: 2px;
}
.drop.bar::before {
  content: "";
  width: 6px;
  height: 2px;
  background: #2a78a8;
}
.drop.bar::after { border-top-color: #2a78a8; }
.search {
  width: 200px;
  height: 24px;
  margin: 0 1px;
  padding: 0 3px;
  border: 1px solid #8c8c8c;
  font: inherit;
  color: #555;
}
.search::placeholder {
  color: #555;
}
.title {
  justify-self: center;
  font-size: 12px;
  line-height: 40px;
  color: #444;
}
.winbtns {
  display: flex;
  align-items: center;
  padding: 0 0 6px 1px;
}
.winbtns button {
  width: 47px;
}
.winbtns svg {
  width: 12px;
  height: 12px;
}

/* ribbon tabs */
.tabs {
  height: 31px;
  display: grid;
  grid-template-columns: 59px 71px 37px 85px 77px 151px 157px 154px 72px 55px 139px 1fr;
  border-bottom: 1px solid #c9c9c9;
  line-height: 34px;
  color: #111;
}
.tabs a {
  text-align: center;
  white-space: nowrap;
}
.tabs .file {
  height: 30px;
  margin-top: 1px;
  background: #2a96f8;
  color: #fff;
  line-height: 30px;
}
.tabs .active {
  height: 30px;
  margin: 1px 0 0 2px;
  background: #fff;
  border: 1px solid #c9c9c9;
  border-bottom: 0;
  line-height: 31px;
  color: #23729c;
}
.collapse {
  justify-self: end;
  width: 26px;
}
.collapse svg {
  width: 10px;
  height: 10px;
}

/* ribbon */
.ribbon {
  height: 105px;
  display: grid;
  grid-template-columns: 570px 355px 600px 142px 182px;
  padding-top: 3px;
  border-bottom: 1px solid #b5cddd;
}
.group {
  height: 98px;
  display: grid;
  grid-template-rows: 78px 20px;
  border-right: 1px solid #d5d5d5;
  white-space: nowrap;
}
.group h2 {
  font-size: 12px;
  line-height: 20px;
  text-align: center;
  color: #333;
}
.big-row {
  display: grid;
  grid-template-columns: 70px 71px 78px 86px 101px 66px 92px;
  padding-left: 5px;
}
.big {
  display: flex;
  flex-direction: column;
  align-items: center;
  line-height: 17px;
  color: #222;
}
.big svg {
  flex: none;
  width: 36px;
  height: 36px;
  margin: 2px 0;
}
.off, .off.small {
  color: #a5a5a5;
}
.cols {
  display: grid;
}
.estimate { grid-template-columns: 175px 1fr; padding-left: 6px; }
.measure { grid-template-columns: 179px 248px 1fr; padding-left: 4px; }
.pmi { padding-left: 5px; }
.report { padding-left: 6px; }
.col {
  display: flex;
  flex-direction: column;
  align-items: flex-start;
  padding-top: 2px;
}
.small {
  height: 25px;
  padding: 0 5px 0 3px;
  display: flex;
  align-items: center;
  gap: 4px;
  color: #222;
}
.small svg {
  width: 20px;
  height: 20px;
}
.on {
  background: #94c5f0;
}

/* viewport */
.work {
  flex: 1;
  display: grid;
  grid-template-columns: 1fr 395px;
  min-height: 0;
}
.viewport {
  display: flex;
  flex-direction: column;
  background: #badef9;
}
.scene {
  flex: 1;
  min-height: 0;
}
.ruler {
  background: linear-gradient(#eaf4fd, #bcdffa);
  font: 17px "Liberation Sans", sans-serif;
  fill: #000;
}
.unit {
  font: 600 15px "Noto Sans", sans-serif;
}
.axis {
  font: bold 13px "Liberation Sans", sans-serif;
}
.red-t { fill: #a51d2c; }
.blue-t { fill: #2f68b8; }
.green-t { fill: #6ccb45; }
.dim rect {
  fill: #fff;
  stroke: #111;
}
.dim text {
  font: 16px "Liberation Sans", sans-serif;
  text-anchor: middle;
}
.wcs {
  font: 14px "Liberation Sans", sans-serif;
  fill: #1c2f42;
  text-anchor: middle;
}
.tag path {
  fill: #fbeedd;
  stroke: #111;
}
.tag circle {
  fill: none;
  stroke: #333;
}
.tag text {
  font: 13px "Liberation Sans", sans-serif;
  text-anchor: middle;
}
.bottom {
  font: bold 12px "Noto Sans", sans-serif;
  fill: #777;
  text-anchor: middle;
}
.cube-ax {
  font: 16px "Noto Sans", sans-serif;
  text-anchor: middle;
}

/* docked pages */
.pages {
  padding-left: 6px;
}
.sheet {
  height: 57px;
  display: flex;
  flex-direction: column;
  justify-content: space-between;
  border-left: 1px solid #ddd;
}
.sheet.line {
  border-bottom: 1px solid #999;
}
.sheet header {
  height: 30px;
  display: flex;
  align-items: center;
  gap: 6px;
  padding: 0 8px 0 10px;
}
.sheet header button {
  width: 14px;
  font: bold 14px "Liberation Sans", sans-serif;
}
.open {
  width: 12px;
}
.open::after {
  content: "";
  display: block;
  width: 0;
  border: 6px solid transparent;
  border-left: 7px solid #000;
  border-right: 0;
}
.dots {
  flex: 1;
  height: 5px;
  background: radial-gradient(circle at 1px 1px, #555 1px, transparent 1px) 0 0 / 4px 4px,
    radial-gradient(circle at 1px 1px, #777 1px, transparent 1px) 2px 2px / 4px 4px;
}
.strip {
  display: flex;
  justify-content: flex-end;
  height: 26px;
  line-height: 28px;
  border-bottom: 1px solid #999;
}
.strip span {
  margin-right: 4px;
}
.strip .far {
  margin-right: 25px;
}
.strip .cut {
  margin-right: -3px;
}
.strip button {
  width: 20px;
  display: flex;
  align-items: center;
  justify-content: center;
  border: 1px solid #999;
  border-bottom: 0;
  background: #fff;
}
.strip button + button {
  border-left: 0;
}
.arr {
  border: 6px solid transparent;
  border-left: 8px solid #000;
  border-right: 0;
}
.arr.left {
  border: 6px solid transparent;
  border-right: 8px solid #888;
  border-left: 0;
}

/* bottom toolbar */
.toolbar {
  height: 34px;
  display: flex;
  align-items: center;
  border-bottom: 1px solid #9a9a9a;
}
.grip {
  width: 8px;
  height: 22px;
  margin-right: 3px;
  background: repeating-linear-gradient(#222 0 2px, transparent 2px 4px) 4px 0 / 2px 22px no-repeat;
}
.t {
  width: 31px;
  height: 30px;
}
.t svg {
  display: block;
  width: 24px;
  height: 24px;
  margin: auto;
}
.tsep {
  width: 1px;
  height: 24px;
  margin: 0 3px;
  background: #dcdcdc;
}
.hot { background: #9ac8f0; }
.hot2 { height: 30px; background: #cfe5f8; }
.m-color { --h: #f0a01e; --g: #c0c0c0; --s: #666; }
.m-grey { --h: #aaa; --g: #ddd; --s: #aaa; }
.t-green { --f: #82bb44; --s: #444; }
.t-olive { --f: #8fae3c; --s: #555; }
.t-grey { --f: #bbb; --s: #999; }
.t-hollow { --f: #fff; --s: #999; color: #999; }
.t-dark { --f: #bbb; --s: #444; color: #2a94dc; }
.status {
  height: 23px;
  padding-left: 6px;
  background: #2a98fd;
  color: #0b2f57;
  line-height: 25px;
}

/* fix wizard window */
.dialog {
  position: absolute;
  top: 191px;
  right: 69px;
  width: 770px;
  min-height: 712px;
  display: flex;
  flex-direction: column;
  background: #f0f0f0;
  border: 1px solid #8a9096;
  box-shadow: 2px 3px 8px rgba(0, 0, 0, .4);
  color: #111;
}
.dlg-title {
  height: 37px;
  display: flex;
  align-items: center;
  padding-left: 10px;
  background: #fff;
}
.dlg-title > svg {
  width: 18px;
  height: 18px;
}
.dlg-title h2 {
  flex: 1;
  padding-left: 5px;
  font-size: 14px;
  color: #999;
}
.dlg-title button {
  width: 59px;
}
.dlg-title button svg {
  width: 14px;
  height: 14px;
}
.dlg-body {
  flex: 1;
  display: flex;
  padding: 5px 5px 5px 4px;
}
.steps {
  width: 152px;
  padding: 2px 7px 0 1px;
  background: #fff;
  border: 1px solid #777;
  outline: 1px solid #999;
  outline-offset: -3px;
  font-size: 14px;
}
.steps li {
  height: 24px;
  display: flex;
  align-items: center;
  gap: 3px;
  padding-left: 4px;
}
.steps li svg {
  width: 20px;
  height: 20px;
}
.steps li a {
  flex: 1;
  line-height: 24px;
}
.steps .current a {
  background: #eee;
}
.steps .rule::after {
  content: "";
  flex: 1;
  height: 1px;
  margin-left: -4px;
  background: #888;
}
.pane {
  flex: 1;
  display: flex;
  flex-direction: column;
  padding-left: 9px;
}
.part-row {
  display: flex;
  align-items: flex-start;
  padding-left: 8px;
}
.part-row label {
  width: 91px;
  line-height: 17px;
}
.pick {
  flex: 1;
  position: relative;
}
.pick select {
  width: 100%;
  height: 25px;
  padding: 0 3px;
  appearance: none;
  background: #e1e1e1;
  border: 1px solid #999;
  border-radius: 0;
  font: inherit;
  color: #111;
}
.pick svg {
  position: absolute;
  right: 5px;
  top: 7px;
  width: 10px;
  height: 10px;
  pointer-events: none;
}
.next {
  width: 57px;
  height: 29px;
  margin: 1px 0 0 5px;
  background: #ccc;
  border: 1px solid #bfbfbf;
  color: #888;
}
.box {
  margin: 10px 4px 0 0;
  padding: 26px 12px 13px;
  border: 1px solid #aaa;
  border-radius: 4px;
  background: linear-gradient(#fff, #f0f0f0);
}
fieldset {
  margin: 0 0 6px;
  padding: 0;
  border: 1px solid #ddd;
}
fieldset:last-child {
  margin: 0;
}
legend {
  margin-left: 5px;
  padding: 0 3px;
  line-height: 18px;
}
.advice {
  display: flex;
  justify-content: space-between;
  padding: 8px 12px 11px 15px;
}
.advice p {
  width: 512px;
  line-height: 17px;
}
.scroll {
  width: 20px;
  height: 56px;
  display: flex;
  flex-direction: column;
  justify-content: space-between;
  background: #f0f0f0;
}
.scroll button {
  height: 20px;
}
.scroll svg {
  width: 12px;
  height: 12px;
}
.diag {
  display: flex;
  flex-direction: column;
  padding: 9px 12px 10px;
}
.diag input {
  appearance: none;
  width: 16px;
  height: 16px;
  margin: 0;
  background: #fff;
  border: 1px solid #333;
}
.diag input:checked::after {
  content: "";
  display: block;
  width: 10px;
  height: 5px;
  margin: 3px 2px;
  border: solid #333;
  border-width: 0 0 1px 1px;
  transform: rotate(-48deg);
}
.full {
  display: flex;
  align-items: center;
  gap: 3px;
  height: 18px;
  margin-bottom: 15px;
}
.checks {
  padding-left: 25px;
}
.checks li {
  height: 25px;
  display: grid;
  grid-template-columns: 25px 25px 56px 1fr;
  align-items: center;
}
.checks .sub {
  padding-left: 25px;
}
.checks svg {
  width: 16px;
  height: 17px;
}
.dot {
  width: 4px;
  height: 4px;
  margin-left: 6px;
  border-radius: 2px;
  background: #3c3cae;
}
.btn {
  width: 74px;
  height: 32px;
  display: flex;
  align-items: center;
  padding: 0 3px;
  background: #e1e1e1;
  border: 1px solid #a8a8a8;
}
.btn span {
  flex: 1;
  text-align: center;
}
.btn svg {
  width: 20px;
  height: 20px;
}
.update {
  width: 139px;
  height: 30px;
  margin-top: 13px;
  align-self: flex-end;
}
.actions {
  margin-top: auto;
  display: flex;
  justify-content: flex-end;
  gap: 7px;
  padding-right: 19px;
}
.follow {
  width: 189px;
}
.resize {
  position: absolute;
  right: 0;
  bottom: 0;
  width: 14px;
  height: 14px;
}
```
